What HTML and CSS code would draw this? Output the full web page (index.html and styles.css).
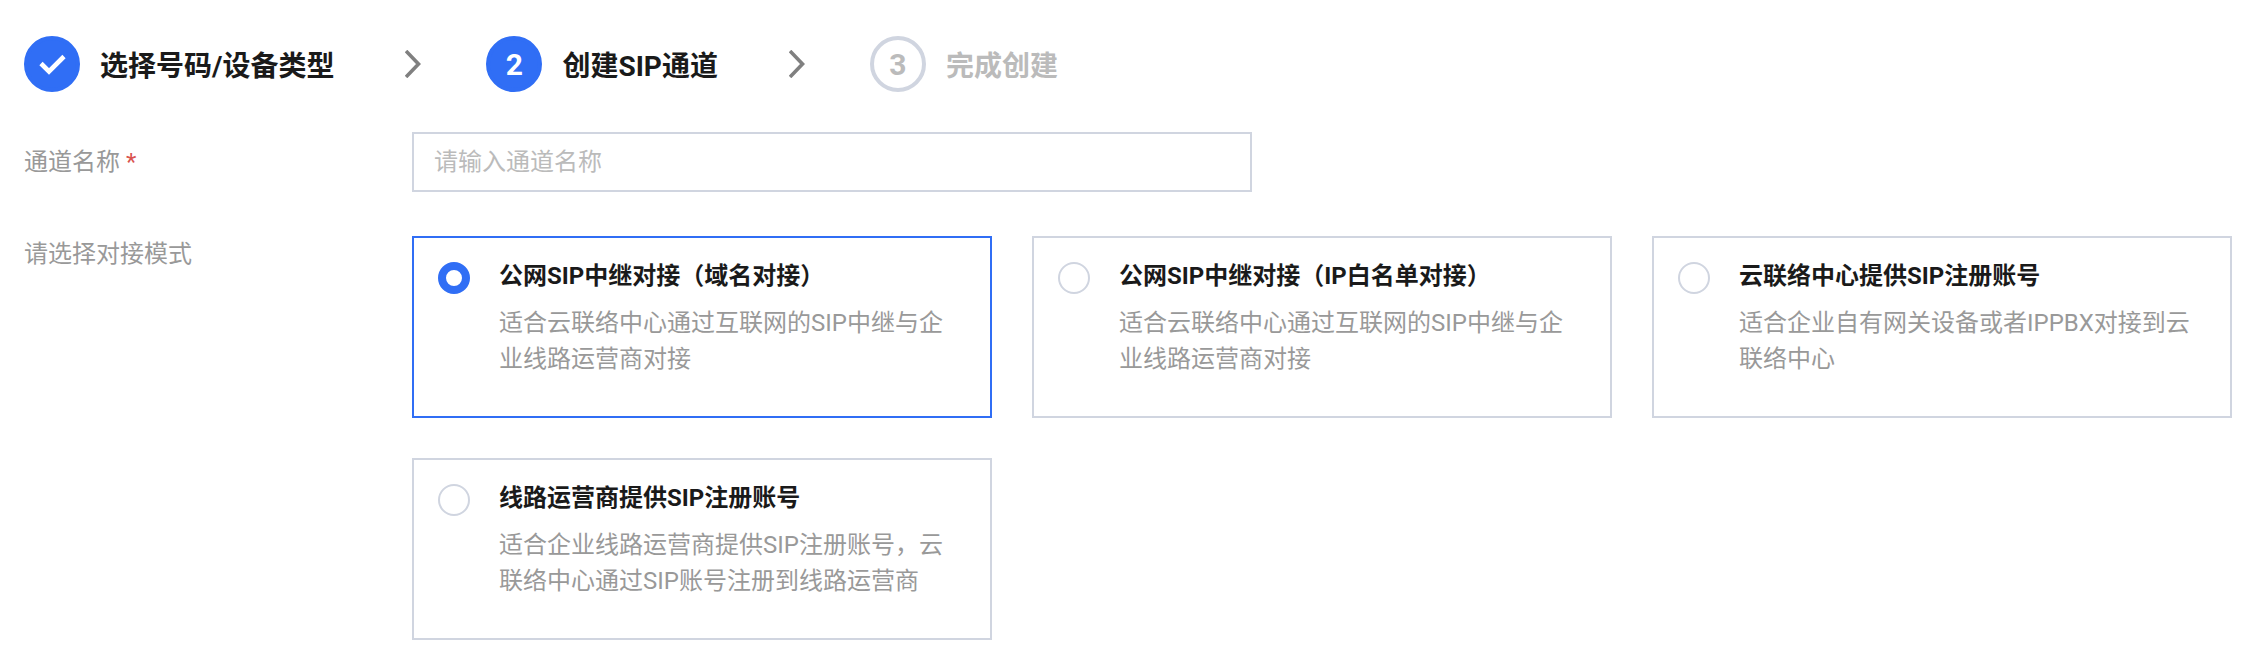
FILE: index.html
```html
<!DOCTYPE html>
<html lang="zh-CN">
<head>
    <meta charset="UTF-8">
    <title>创建SIP通道</title>
    <link rel="stylesheet" href="styles.css">
</head>
<body>

<!-- 步骤条 -->
<div class="steps">
    <div class="step">
        <span class="step-num done">
            <svg width="32" height="32" viewBox="0 0 32 32"><path d="M5 15.5 L13 23.5 L28 8.5" fill="none" stroke="#fff" stroke-width="4.6"/></svg>
        </span>
        <span class="step-text">选择号码/设备类型</span>
    </div>
    <svg class="step-arrow" width="16" height="28" viewBox="0 0 16 28"><path d="M1 1 L13.5 14 L1 27" fill="none" stroke="#808080" stroke-width="3.6"/></svg>
    <div class="step">
        <span class="step-num active">2</span>
        <span class="step-text">创建SIP通道</span>
    </div>
    <svg class="step-arrow" width="16" height="28" viewBox="0 0 16 28"><path d="M1 1 L13.5 14 L1 27" fill="none" stroke="#808080" stroke-width="3.6"/></svg>
    <div class="step todo">
        <span class="step-num">3</span>
        <span class="step-text">完成创建</span>
    </div>
</div>

<!-- 表单 -->
<form class="form">
    <div class="form-row row-name">
        <label class="form-label" for="name">通道名称<span class="required">*</span></label>
        <input class="text-input" type="text" id="name" placeholder="请输入通道名称">
    </div>
    <div class="form-row">
        <div class="form-label">请选择对接模式</div>
        <div class="card-grid">
            <div class="card selected">
                <span class="radio"></span>
                <div class="card-body">
                    <div class="card-title">公网SIP中继对接（域名对接）</div>
                    <div class="card-desc">适合云联络中心通过互联网的SIP中继与企业线路运营商对接</div>
                </div>
            </div>
            <div class="card">
                <span class="radio"></span>
                <div class="card-body">
                    <div class="card-title">公网SIP中继对接（IP白名单对接）</div>
                    <div class="card-desc">适合云联络中心通过互联网的SIP中继与企业线路运营商对接</div>
                </div>
            </div>
            <div class="card">
                <span class="radio"></span>
                <div class="card-body">
                    <div class="card-title">云联络中心提供SIP注册账号</div>
                    <div class="card-desc">适合企业自有网关设备或者IPPBX对接到云联络中心</div>
                </div>
            </div>
            <div class="card">
                <span class="radio"></span>
                <div class="card-body">
                    <div class="card-title">线路运营商提供SIP注册账号</div>
                    <div class="card-desc">适合企业线路运营商提供SIP注册账号，云联络中心通过SIP账号注册到线路运营商</div>
                </div>
            </div>
        </div>
    </div>
</form>

</body>
</html>
```

FILE: styles.css
```css
/* 基本设置 */
body {
    margin: 0;
    padding: 36px 26px 0 24px;
    font-family: Roboto, "Noto Sans CJK SC", sans-serif;
    font-size: 24px;
    color: #1a1a1a;
    background: #fff;
}

/* 步骤条 */
.steps {
    display: flex;
    align-items: center;
    height: 56px;
}
.step {
    display: flex;
    align-items: center;
}
.step-num {
    display: flex;
    justify-content: center;
    align-items: center;
    box-sizing: border-box;
    width: 56px;
    height: 56px;
    border: 4px solid #d0d5e0;
    border-radius: 50%;
    font-size: 30px;
    font-weight: 700;
    color: #bbb;
}
.step-num.done, .step-num.active {
    border-color: #306ef5;
    background: #306ef5;
    color: #fff;
}
.step-text {
    margin-left: 20px;
    font-size: 28px;
    font-weight: 700;
}
.todo .step-text {
    color: #bbb;
}
.step-arrow {
    margin: 0 65px 0 71px;
}

/* 表单 */
.form-row {
    display: flex;
}
.row-name {
    margin-top: 40px;
    margin-bottom: 44px;
    align-items: center;
}
.form-label {
    width: 388px;
    flex: none;
    color: #999;
    line-height: 36px;
}
.required {
    margin-left: 6px;
    color: #d9534f;
}
.text-input {
    box-sizing: border-box;
    width: 840px;
    height: 60px;
    padding: 0 20px;
    border: 2px solid #d0d5e0;
    border-radius: 0;
    outline: none;
    font-family: inherit;
    font-size: 24px;
}
.text-input::placeholder {
    color: #bbb;
}

/* 选择卡片 */
.card-grid {
    display: grid;
    grid-template-columns: repeat(3, 580px);
    gap: 40px;
}
.card {
    display: flex;
    box-sizing: border-box;
    height: 182px;
    padding: 24px 36px 0 24px;
    border: 2px solid #d0d5e0;
}
.card.selected {
    border-color: #306ef5;
}
.radio {
    flex: none;
    box-sizing: border-box;
    width: 32px;
    height: 32px;
    margin-right: 29px;
    border: 2px solid #d0d5e0;
    border-radius: 50%;
}
.selected .radio {
    border: 8px solid #306ef5;
}
.card-title {
    font-weight: 700;
    line-height: 28px;
}
.card-desc {
    margin-top: 15px;
    color: #999;
    line-height: 36px;
}
```
